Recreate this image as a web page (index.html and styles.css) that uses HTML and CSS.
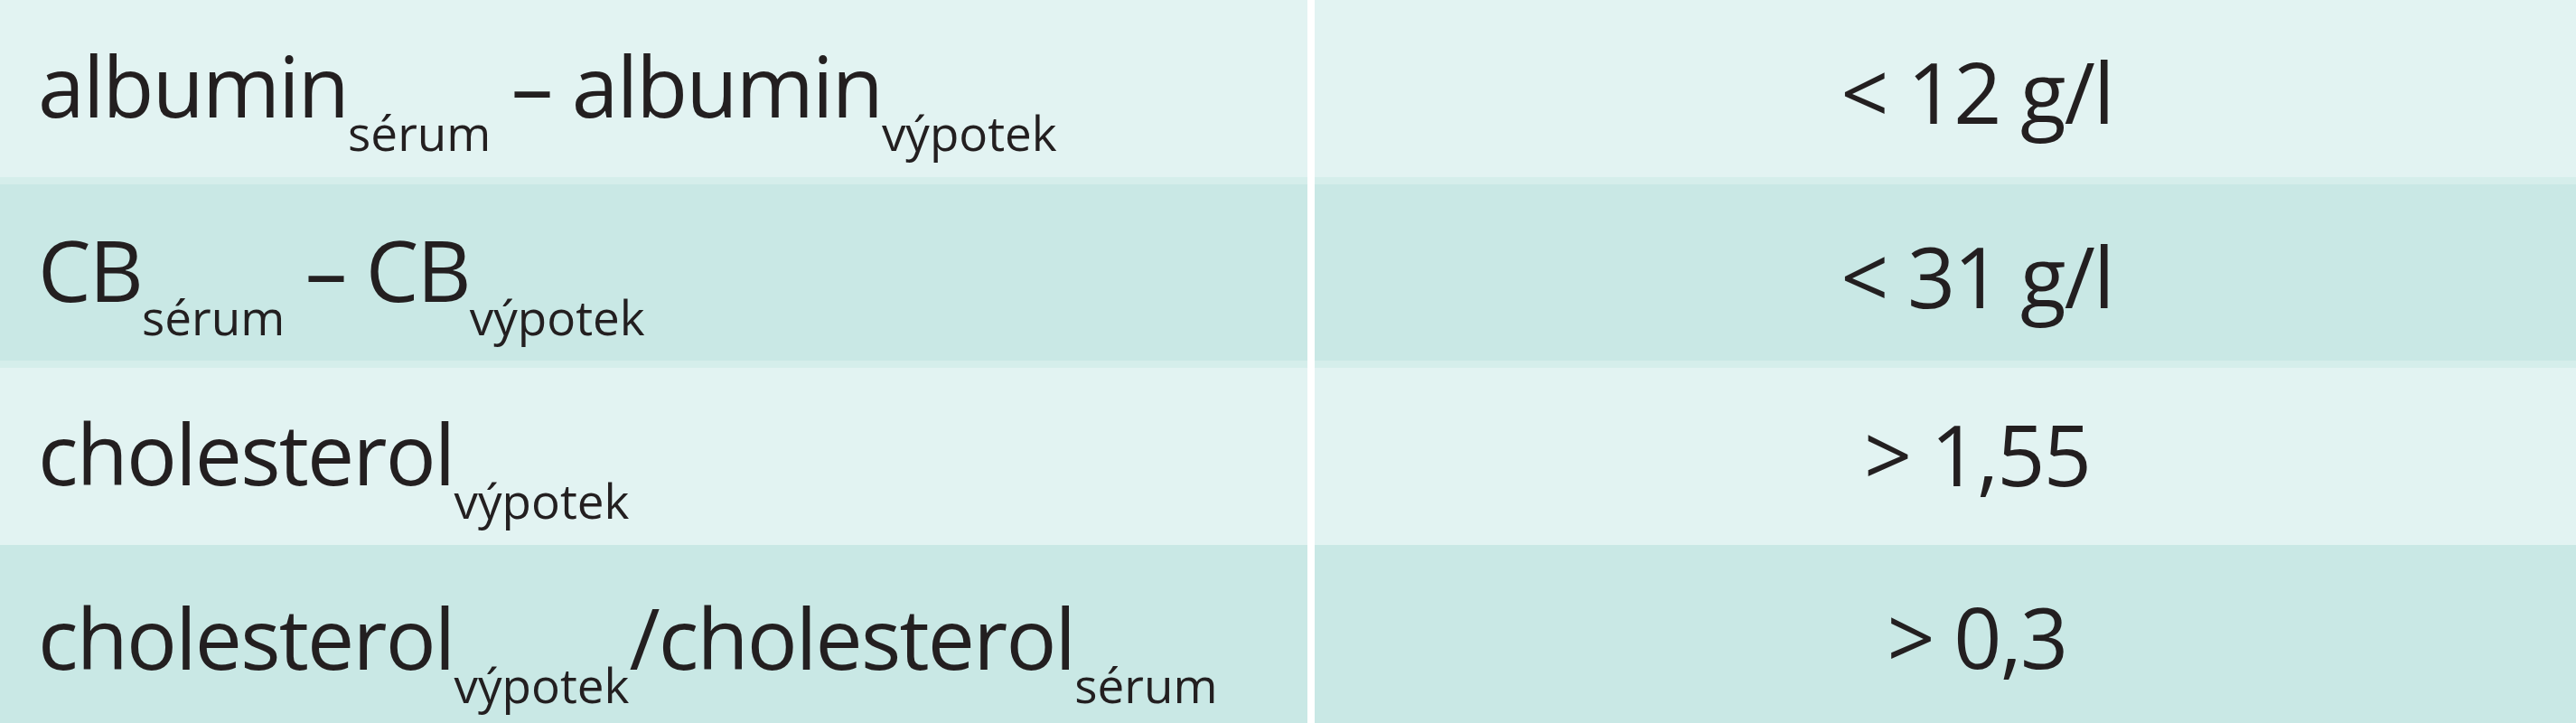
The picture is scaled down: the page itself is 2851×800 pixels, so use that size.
FILE: index.html
```html
<!DOCTYPE html>
<html lang="cs">
<head>
<meta charset="utf-8">
<title>Tabulka</title>
<link rel="stylesheet" href="styles.css">
</head>
<body>
<div class="tbl">
  <div class="row row1 light">
    <div class="cell label">albumin<sub>sérum</sub> – albumin<sub>výpotek</sub></div>
    <div class="cell value">&lt; 12 g/l</div>
  </div>
  <div class="row row2 dark">
    <div class="cell label">CB<sub>sérum</sub> – CB<sub>výpotek</sub></div>
    <div class="cell value">&lt; 31 g/l</div>
  </div>
  <div class="row row3 light">
    <div class="cell label">cholesterol<sub>výpotek</sub></div>
    <div class="cell value">&gt; 1,55</div>
  </div>
  <div class="row row4 dark">
    <div class="cell label">cholesterol<sub>výpotek</sub>/cholesterol<sub>sérum</sub></div>
    <div class="cell value">&gt; 0,3</div>
  </div>
</div>
</body>
</html>
```

FILE: styles.css
```css
html, body {
  margin: 0;
  padding: 0;
  background: #ffffff;
}

body {
  width: 2851px;
  height: 800px;
  overflow: hidden;
  font-family: "Open Sans", "Noto Sans", sans-serif;
  color: #231f20;
}

.tbl {
  display: flex;
  flex-direction: column;
}

.row {
  display: grid;
  grid-template-columns: 1447px 1fr;
  column-gap: 8px;
}

.cell {
  box-sizing: border-box;
  font-size: 93px;
  line-height: 100px;
  letter-spacing: -1.8px;
  white-space: nowrap;
  overflow: hidden;
}

.light .cell { background: #e2f3f2; }
.dark .cell { background: #c9e8e5; }

.row1 .cell { height: 204px; border-bottom: 8px solid #d5eeeb; }
.row2 .cell { height: 203px; border-bottom: 8px solid #d5eeeb; }
.row3 .cell { height: 196px; }
.row4 .cell { height: 197px; }

.label {
  padding: 44px 0 0 42px;
}

.value {
  padding: 51px 0 0 70px;
  text-align: center;
}

.row3 .value { padding-top: 45px; }
.row4 .label { padding-top: 52px; }

sub {
  font-size: 53px;
  line-height: 1;
  letter-spacing: 0;
  vertical-align: -37px;
}
```
